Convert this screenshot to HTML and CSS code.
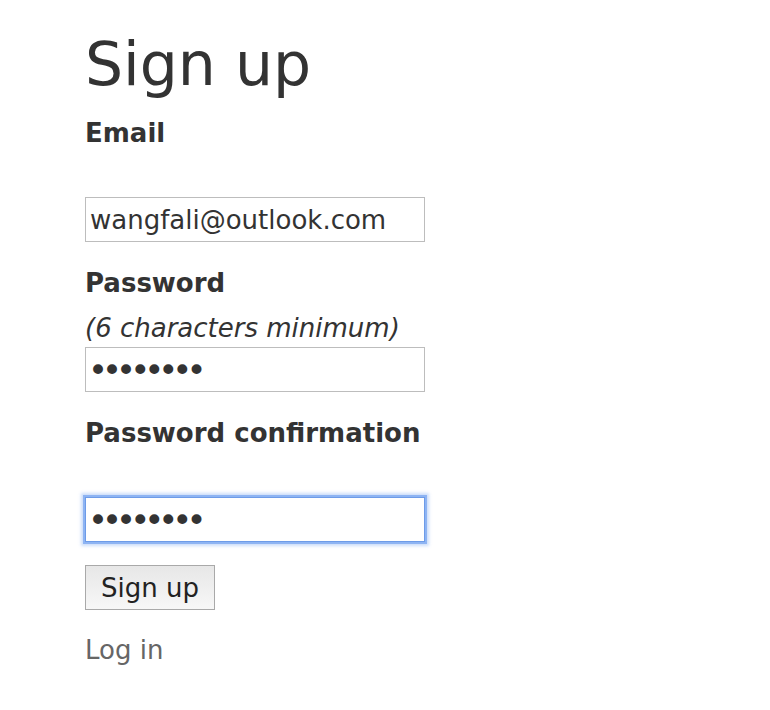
FILE: index.html
```html
<!DOCTYPE html>
<html lang="en">
<head>
<meta charset="utf-8">
<title>Sign up</title>
<link rel="stylesheet" href="styles.css">
</head>
<body>
<main class="page">
  <h1 class="title">Sign up</h1>
  <form class="form">
    <div class="field">
      <label class="label" for="email">Email</label>
      <div class="hint"></div>
      <input class="input" id="email" type="email" value="wangfali@outlook.com">
    </div>
    <div class="field">
      <label class="label" for="pw">Password</label>
      <div class="hint"><em>(6 characters minimum)</em></div>
      <input class="input input-pw" id="pw" type="password" value="password">
    </div>
    <div class="field">
      <label class="label" for="pwc">Password confirmation</label>
      <div class="hint"></div>
      <input class="input input-pw is-focused" id="pwc" type="password" value="password">
    </div>
    <div class="actions">
      <button class="btn" type="button">Sign up</button>
    </div>
  </form>
  <a class="link" href="#">Log in</a>
</main>
</body>
</html>
```
FILE: styles.css
```css
html, body {
  margin: 0;
  padding: 0;
  background: #fff;
}
body {
  font-family: "DejaVu Sans", Verdana, sans-serif;
  color: #333;
  font-size: 26px;
}
.page {
  padding: 29px 0 0 85px;
}
.title {
  margin: 0;
  font-size: 60px;
  line-height: 70px;
  font-weight: normal;
  color: #333;
}
.form {
  margin: 16px 0 0;
}
.field {
  margin-bottom: 23px;
}
.label {
  display: block;
  font-weight: bold;
  line-height: 37px;
  margin-bottom: 8px;
}
.hint {
  height: 37px;
  line-height: 37px;
}
.hint em {
  font-style: italic;
}
.input {
  display: block;
  box-sizing: border-box;
  width: 340px;
  height: 45px;
  margin: 0;
  padding: 0 4px;
  border: 1px solid #bdbdbd;
  background: #fff;
  font-family: "DejaVu Sans", Verdana, sans-serif;
  font-size: 26px;
  color: #333;
  outline: none;
}
.input-pw {
  font-size: 34px;
  letter-spacing: -6px;
  padding-left: 2px;
}
.is-focused {
  border-color: #6d9be8;
  box-shadow: 0 0 0 2px rgba(120, 165, 240, 0.75), 0 0 3px 4px rgba(140, 180, 245, 0.45);
}
.btn {
  box-sizing: border-box;
  width: 130px;
  height: 45px;
  margin: 0;
  padding: 0;
  border: 1px solid #a9a9a9;
  border-radius: 0;
  background: linear-gradient(#e7e7e7, #f7f7f7);
  font-family: "DejaVu Sans", Verdana, sans-serif;
  font-size: 26px;
  color: #222;
}
.link {
  display: block;
  margin-top: 22px;
  line-height: 37px;
  color: #666;
  text-decoration: none;
  width: max-content;
}
```
